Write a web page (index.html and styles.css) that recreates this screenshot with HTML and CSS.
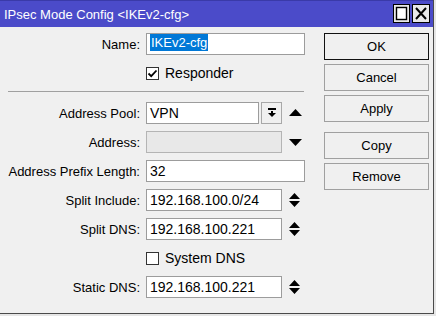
FILE: index.html
```html
<html>

<head>
    <title>IPsec Mode Config</title>
    <link rel="stylesheet" href="styles.css">
</head>

<body>
	<div class="window">
		<div class="titlebar">
			<span class="title">IPsec Mode Config &lt;IKEv2-cfg&gt;</span>
			<div class="winbtns">
				<span class="winbtn">
					<svg width="17" height="19" viewBox="0 0 17 19"><rect x="0.5" y="0.5" width="16" height="18" fill="#e8e8e8" stroke="#000"/><rect x="3.5" y="3.5" width="10" height="12" fill="#fff" stroke="#000" stroke-width="1.4"/></svg>
				</span>
				<span class="winbtn">
					<svg width="18" height="19" viewBox="0 0 18 19"><rect x="0.5" y="0.5" width="17" height="18" fill="#e8e8e8" stroke="#000"/><path d="M4 4 L14 15 M14 4 L4 15" stroke="#000" stroke-width="2"/></svg>
				</span>
			</div>
		</div>

		<div class="content">
			<div class="form">
				<div class="row">
					<span class="label">Name:</span>
					<div class="field wide"><span class="sel">IKEv2-cfg</span></div>
				</div>
				<div class="row">
					<span class="label"></span>
					<span class="check on">
						<svg width="13" height="13" viewBox="0 0 13 13"><path d="M2.5 6.5 L5.2 9.2 L10.5 3.5" fill="none" stroke="#000" stroke-width="1.8"/></svg>
					</span>
					<span class="checktext">Responder</span>
				</div>

				<div class="sep"></div>

				<div class="row">
					<span class="label">Address Pool:</span>
					<div class="field pool">VPN</div>
					<div class="drop">
						<svg width="10" height="10" viewBox="0 0 10 10"><rect x="1" y="0" width="8" height="2" fill="#000"/><rect x="4" y="3" width="2" height="2" fill="#000"/><path d="M1 5 L9 5 L5 9 Z" fill="#000"/></svg>
					</div>
					<span class="arrow">
						<svg width="13" height="8" viewBox="0 0 13 8"><path d="M0 7 L13 7 L6.5 0 Z" fill="#000"/></svg>
					</span>
				</div>
				<div class="row">
					<span class="label">Address:</span>
					<div class="field mid off"></div>
					<span class="arrow">
						<svg width="13" height="8" viewBox="0 0 13 8"><path d="M0 1 L13 1 L6.5 8 Z" fill="#000"/></svg>
					</span>
				</div>
				<div class="row">
					<span class="label">Address Prefix Length:</span>
					<div class="field wide num">32</div>
				</div>
				<div class="row">
					<span class="label">Split Include:</span>
					<div class="field mid num">192.168.100.0/24</div>
					<span class="arrow updown">
						<svg width="11" height="14" viewBox="0 0 11 14"><path d="M0 6 L11 6 L5.5 0 Z M0 8 L11 8 L5.5 14 Z" fill="#000"/></svg>
					</span>
				</div>
				<div class="row">
					<span class="label">Split DNS:</span>
					<div class="field mid num">192.168.100.221</div>
					<span class="arrow updown">
						<svg width="11" height="14" viewBox="0 0 11 14"><path d="M0 6 L11 6 L5.5 0 Z M0 8 L11 8 L5.5 14 Z" fill="#000"/></svg>
					</span>
				</div>
				<div class="row">
					<span class="label"></span>
					<span class="check"></span>
					<span class="checktext">System DNS</span>
				</div>
				<div class="row">
					<span class="label">Static DNS:</span>
					<div class="field mid num">192.168.100.221</div>
					<span class="arrow updown">
						<svg width="11" height="14" viewBox="0 0 11 14"><path d="M0 6 L11 6 L5.5 0 Z M0 8 L11 8 L5.5 14 Z" fill="#000"/></svg>
					</span>
				</div>
			</div>

			<div class="buttons">
				<button class="default">OK</button>
				<button>Cancel</button>
				<button>Apply</button>
				<button class="gap">Copy</button>
				<button>Remove</button>
			</div>
		</div>
	</div>
</body>

</html>
```

FILE: styles.css
```css
body {
	margin: 0;
	font-family: "Liberation Sans", Arial, sans-serif;
	font-size: 13px;
	color: #000;
	background-color: #e6e6e6;
}

.window {
	width: 433px;
	height: 313px;
	background-color: #f0f0f0;
	border-right: 1px solid #4a4a4a;
	border-bottom: 1px solid #4a4a4a;
	display: flex;
	flex-direction: column;
}

.titlebar {
	height: 27px;
	background-color: #4b4bc9;
	border-top: 1px solid #3a3aa8;
	box-sizing: border-box;
	display: flex;
	align-items: center;
	justify-content: space-between;
	padding: 0 3px 0 4px;
}

.title {
	color: #fff;
	font-size: 13px;
}

.winbtns {
	display: flex;
	gap: 2px;
	margin-top: -1px;
}

.winbtn svg {
	display: block;
}

.content {
	display: flex;
	flex: 1;
}

.form {
	width: 310px;
	padding-top: 6px;
}

.row {
	display: flex;
	align-items: center;
	height: 22px;
	margin-bottom: 7px;
}

.label {
	width: 140px;
	text-align: right;
	margin-right: 6px;
	flex-shrink: 0;
}

.field {
	height: 22px;
	box-sizing: border-box;
	border: 1px solid #9c9c9c;
	background-color: #fff;
	padding-left: 3px;
	line-height: 20px;
	white-space: nowrap;
}

.field.num {
	font-size: 14px;
}

.field.wide {
	width: 159px;
}

.field.mid {
	width: 136px;
}

.field.pool {
	width: 113px;
	font-size: 14px;
}

.field.off {
	background-color: #e8e8e8;
	border-color: #b4b4b4;
}

.sel {
	background-color: #0078d7;
	color: #fff;
	display: inline-block;
	line-height: 17px;
	padding: 0 1px;
}

.drop {
	width: 21px;
	height: 22px;
	box-sizing: border-box;
	margin-left: 2px;
	border: 1px solid #a8a8a8;
	background-color: #f0f0f0;
	display: flex;
	align-items: center;
	justify-content: center;
}

.arrow {
	margin-left: 7px;
	display: flex;
}

.check {
	width: 13px;
	height: 13px;
	box-sizing: border-box;
	border: 1px solid #333;
	background-color: #fff;
	display: flex;
}

.check svg {
	margin: -1px;
}

.checktext {
	margin-left: 6px;
	font-size: 14px;
}

.sep {
	width: 296px;
	height: 1px;
	background-color: #a0a0a0;
	margin: 1px 0 10px 8px;
}

.buttons {
	padding-top: 6px;
	margin-left: 14px;
	display: flex;
	flex-direction: column;
	gap: 4px;
}

button {
	width: 105px;
	height: 27px;
	font-family: "Liberation Sans", Arial, sans-serif;
	font-size: 13px;
	color: #000;
	background-color: #f0f0f0;
	border: 1px solid #a0a0a0;
	padding: 0;
}

button.default {
	border-color: #111;
}

button.gap {
	margin-top: 6px;
}
```
